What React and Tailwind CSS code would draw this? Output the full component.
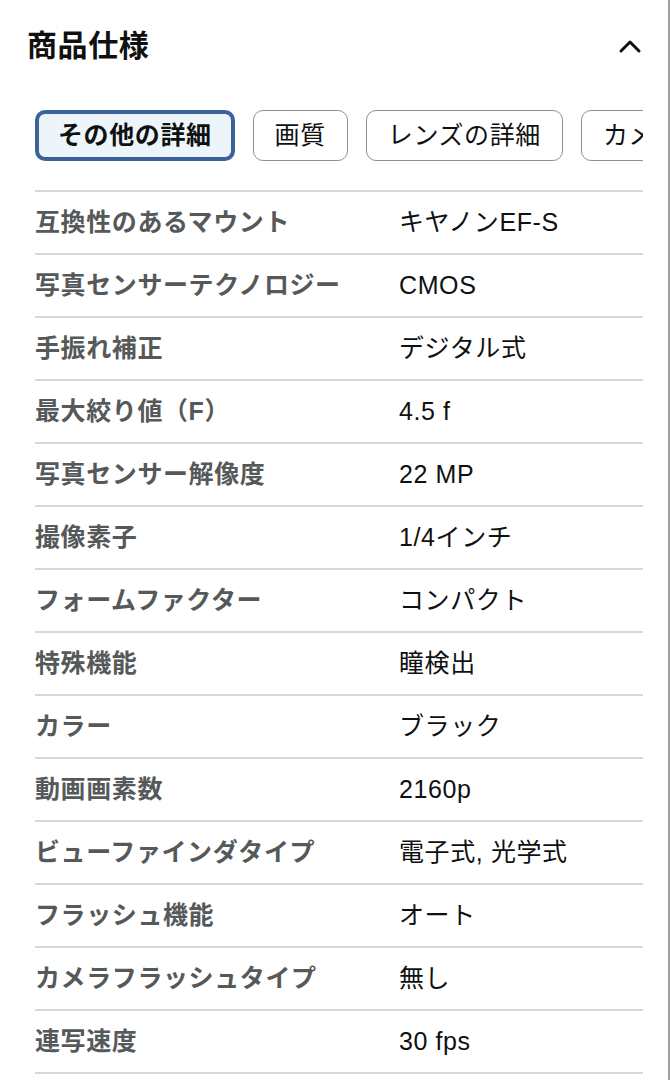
const specs = [
  ["互換性のあるマウント", "キヤノンEF-S"],
  ["写真センサーテクノロジー", "CMOS"],
  ["手振れ補正", "デジタル式"],
  ["最大絞り値（F）", "4.5 f"],
  ["写真センサー解像度", "22 MP"],
  ["撮像素子", "1/4インチ"],
  ["フォームファクター", "コンパクト"],
  ["特殊機能", "瞳検出"],
  ["カラー", "ブラック"],
  ["動画画素数", "2160p"],
  ["ビューファインダタイプ", "電子式, 光学式"],
  ["フラッシュ機能", "オート"],
  ["カメラフラッシュタイプ", "無し"],
  ["連写速度", "30 fps"],
];

const tabs = ["その他の詳細", "画質", "レンズの詳細", "カメラ"];

export default function App() {
  return (
    <div
      className="flex w-[670px] h-[1080px] bg-white overflow-hidden"
      style={{ fontFamily: '"Liberation Sans", "Noto Sans CJK JP", sans-serif' }}
    >
      <div className="w-[668px] shrink-0">
        <div className="flex items-center justify-between pl-[27px] pr-[27px] pt-[25px] h-[66px]">
          <h2 className="text-[30px] font-bold text-[#0f1111] leading-none tracking-[0.6px]">商品仕様</h2>
          <svg width="24" height="16" viewBox="0 0 24 16" className="mr-[-1px]">
            <path d="M3 13 L12 4 L21 13" fill="none" stroke="#0f1111" strokeWidth="3" strokeLinecap="round" strokeLinejoin="round" />
          </svg>
        </div>

        <div className="ml-[35px] w-[608px] overflow-hidden mt-[44px]">
          <div className="flex gap-[18px] w-max">
            {tabs.map((t, i) => (
              <div
                key={t}
                className={
                  i === 0
                    ? "h-[51px] px-[19px] flex items-center rounded-[10px] border-[4px] border-[#3b6399] bg-[#edf5fb] text-[25px] font-bold text-[#0f1111] tracking-[0.6px]"
                    : "h-[51px] px-[21px] flex items-center rounded-[10px] border border-[#8d9096] bg-white text-[25px] text-[#0f1111] tracking-[0.6px]"
                }
              >
                {t}
              </div>
            ))}
          </div>
        </div>

        <div className="ml-[35px] w-[608px] mt-[29px] border-t-2 border-[#d5d9d9]">
          {specs.map(([k, v]) => (
            <div key={k} className="flex items-center h-[63px] border-b-2 border-[#d5d9d9]">
              <div className="w-[364px] shrink-0 text-[25px] font-bold text-[#565959] leading-none tracking-[0.6px]">{k}</div>
              <div className="text-[25px] text-[#0f1111] leading-none tracking-[0.6px]">{v}</div>
            </div>
          ))}
        </div>
      </div>
      <div className="w-[2px] bg-[#a0a0a0] h-full" />
    </div>
  );
}
